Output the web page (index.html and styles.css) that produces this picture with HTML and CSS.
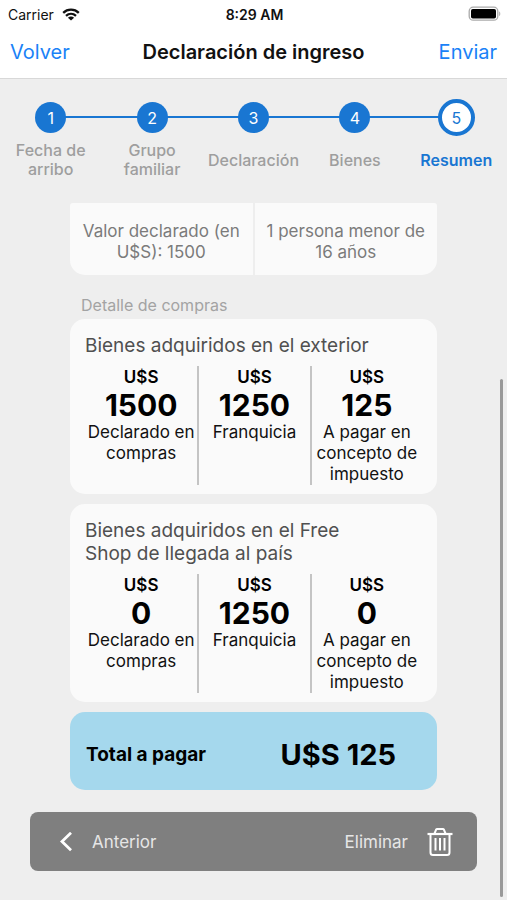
FILE: index.html
```html
<!DOCTYPE html>
<html lang="es">
<head>
<meta charset="utf-8">
<meta name="viewport" content="width=device-width, initial-scale=1">
<title>Declaración de ingreso</title>
<link rel="stylesheet" href="styles.css">
</head>
<body>
<div class="status">
  <div class="status-side">
    <span>Carrier</span>
    <svg width="18" height="13" viewBox="0 0 18 13" aria-hidden="true">
      <g fill="none" stroke="#111" stroke-width="2.3">
        <path d="M1.2 4.8C5.6.6 12.4.6 16.8 4.8"/>
        <path d="M4 7.9c2.9-2.6 7.100-2.600 10 0"/>
      </g>
      <path d="M9 12.600 5.900 9.700c1.800-1.500 4.400-1.500 6.200 0z" fill="#111"/>
    </svg>
  </div>
  <span class="status-time">8:29 AM</span>
  <div class="status-side status-end">
    <svg width="33" height="16" viewBox="0 0 33 16" aria-hidden="true">
      <rect x="1.200" y="1.200" width="28.600" height="13" rx="4" fill="#fff" stroke="#aaa" stroke-width="1.300"/>
      <rect x="3" y="3" width="25" height="9.500" rx="1.800" fill="#000"/>
      <path d="M31.200 5.500c1.400.5 1.400 4 0 4.500z" fill="#aaa"/>
    </svg>
  </div>
</div>
<header class="nav">
  <button type="button" class="nav-btn">Volver</button>
  <h1>Declaración de ingreso</h1>
  <button type="button" class="nav-btn nav-end">Enviar</button>
</header>
<ol class="steps">
  <li class="step"><span class="dot">1</span><span class="step-label">Fecha de arribo</span></li>
  <li class="step"><span class="dot">2</span><span class="step-label">Grupo familiar</span></li>
  <li class="step"><span class="dot">3</span><span class="step-label">Declaración</span></li>
  <li class="step"><span class="dot">4</span><span class="step-label">Bienes</span></li>
  <li class="step current" aria-current="step"><span class="dot">5</span><span class="step-label">Resumen</span></li>
</ol>
<main class="content">
  <section class="summary">
    <p>Valor declarado (en U$S): 1500</p>
    <p>1 persona menor de 16 años</p>
  </section>
  <h2 class="section-title">Detalle de compras</h2>
  <section class="card">
    <h3>Bienes adquiridos en el exterior</h3>
    <div class="figures">
      <div class="figure"><span class="unit">U$S</span><strong>1500</strong><span>Declarado en compras</span></div>
      <div class="figure"><span class="unit">U$S</span><strong>1250</strong><span>Franquicia</span></div>
      <div class="figure"><span class="unit">U$S</span><strong>125</strong><span>A pagar en concepto de impuesto</span></div>
    </div>
  </section>
  <section class="card">
    <h3>Bienes adquiridos en el Free Shop de llegada al país</h3>
    <div class="figures">
      <div class="figure"><span class="unit">U$S</span><strong>0</strong><span>Declarado en compras</span></div>
      <div class="figure"><span class="unit">U$S</span><strong>1250</strong><span>Franquicia</span></div>
      <div class="figure"><span class="unit">U$S</span><strong>0</strong><span>A pagar en concepto de impuesto</span></div>
    </div>
  </section>
  <section class="total">
    <span class="total-label">Total a pagar</span>
    <strong>U$S 125</strong>
  </section>
</main>
<footer class="toolbar">
  <button type="button" class="tool">
    <svg width="14" height="20" viewBox="0 0 14 20" aria-hidden="true"><path d="M12 .8 3 9.500l9 8.700" fill="none" stroke="#fff" stroke-width="2.800"/></svg>
    Anterior
  </button>
  <button type="button" class="tool">
    Eliminar
    <svg width="26" height="30" viewBox="0 0 26 30" aria-hidden="true">
      <g fill="none" stroke="#fff" stroke-width="2">
        <path d="M.5 7h25" stroke-width="2.200"/>
        <path d="M7.500 6.500 9 2.800Q9.400 2 10.200 2h5.600q.8 0 1.200.8l1.500 3.700"/>
        <path d="M3.500 7v18.500q0 2.500 2.500 2.500h14q2.500 0 2.500-2.500V7"/>
        <path d="M8.500 11v12.500M13 11v12.500M17.500 11v12.500"/>
      </g>
    </svg>
  </button>
</footer>
<div class="scroll-thumb"></div>
</body>
</html>
```
FILE: styles.css
```css
* {
  box-sizing: border-box;
}

body {
  margin: 0;
  position: relative;
  min-height: 100vh;
  background: #eee;
  color: #111;
  font-family: Inter, "Liberation Sans", sans-serif;
}

h1, h2, h3, p, ol {
  margin: 0;
  padding: 0;
}

button {
  border: 0;
  padding: 0;
  background: none;
  font: inherit;
  color: inherit;
}

.status {
  display: flex;
  align-items: center;
  height: 28px;
  padding: 0 6px 0 8px;
  background: #fff;
  font-size: 14px;
}

.status-side {
  flex: 1;
  display: flex;
  align-items: center;
  gap: 8px;
}

.status-end {
  justify-content: flex-end;
}

.status-time {
  font-weight: 600;
}

.nav {
  display: flex;
  align-items: center;
  height: 51px;
  padding: 0 10px 2px;
  background: #fff;
  border-bottom: 1px solid #d8d8d8;
}

.nav h1 {
  font-size: 20px;
  font-weight: 600;
  white-space: nowrap;
}

.nav-btn {
  flex: 1;
  text-align: left;
  font-size: 20px;
  color: #1a82f7;
}

.nav-end {
  text-align: right;
}

.steps {
  display: grid;
  grid-template-columns: repeat(5, minmax(0, 1fr));
  list-style: none;
  padding-top: 20px;
}

.step {
  position: relative;
  display: flex;
  flex-direction: column;
  align-items: center;
  color: #9e9e9e;
}

.step + .step::before {
  content: "";
  position: absolute;
  top: 17px;
  left: -50%;
  width: 100%;
  height: 2px;
  background: #1976d2;
}

.dot {
  position: relative;
  z-index: 1;
  display: grid;
  place-items: center;
  width: 31px;
  height: 31px;
  margin: 3px 0;
  border-radius: 50%;
  background: #1976d2;
  color: #fff;
  font-size: 16px;
}

.step-label {
  display: flex;
  align-items: center;
  height: 38px;
  margin-top: 5px;
  padding: 0 4px;
  text-align: center;
  font-size: 16px;
  line-height: 19px;
  font-weight: 500;
}

.current {
  color: #1976d2;
}

.current .dot {
  width: 37px;
  height: 37px;
  margin: 0;
  border: 4px solid #1976d2;
  background: #fff;
  color: #1976d2;
}

.current .step-label {
  font-weight: 600;
}

.content {
  padding: 24px 70px 0;
}

.summary {
  display: grid;
  grid-template-columns: 1fr 1fr;
  gap: 2px;
  border-radius: 3px 3px 15px 15px;
  overflow: hidden;
}

.summary p {
  padding: 18px 12px 12px;
  background: #fafafa;
  color: #7b7b7b;
  text-align: center;
  font-size: 17px;
  line-height: 21px;
}

.section-title {
  padding: 20px 11px 4px;
  color: #a3a3a3;
  font-size: 16px;
  line-height: 20px;
  font-weight: 400;
}

.card {
  margin-bottom: 10px;
  padding: 15px 15px 9px;
  border-radius: 15px;
  background: #fafafa;
}

.card h3 {
  margin-bottom: 9px;
  padding-right: 50px;
  color: #505050;
  font-size: 19px;
  line-height: 23px;
  font-weight: 400;
}

.figures {
  display: grid;
  grid-template-columns: repeat(3, minmax(0, 1fr));
}

.figure {
  display: flex;
  flex-direction: column;
  text-align: center;
  font-size: 17px;
  line-height: 21px;
}

.figure + .figure {
  border-left: 2px solid #c4c4c4;
}

.unit {
  color: #000;
  line-height: 22px;
  font-weight: 600;
}

.figure strong {
  color: #000;
  font-size: 30px;
  line-height: 34px;
  font-weight: 700;
}

.total {
  display: flex;
  align-items: center;
  justify-content: space-between;
  min-height: 78px;
  padding: 6px 41px 0 16px;
  border-radius: 15px;
  background: #a5d8ed;
  color: #000;
}

.total-label {
  font-size: 19px;
  font-weight: 700;
}

.total strong {
  font-size: 29px;
  font-weight: 700;
}

.toolbar {
  display: flex;
  align-items: center;
  justify-content: space-between;
  min-height: 59px;
  margin: 22px 30px 0;
  padding: 0 24px 0 29px;
  border-radius: 8px;
  background: #7f7f7f;
  color: #e6e6e6;
  font-size: 17px;
}

.tool {
  display: flex;
  align-items: center;
  gap: 19px;
}

.scroll-thumb {
  position: absolute;
  top: 379px;
  bottom: 3px;
  right: 4px;
  width: 3px;
  border-radius: 2px;
  background: #999;
}
```
